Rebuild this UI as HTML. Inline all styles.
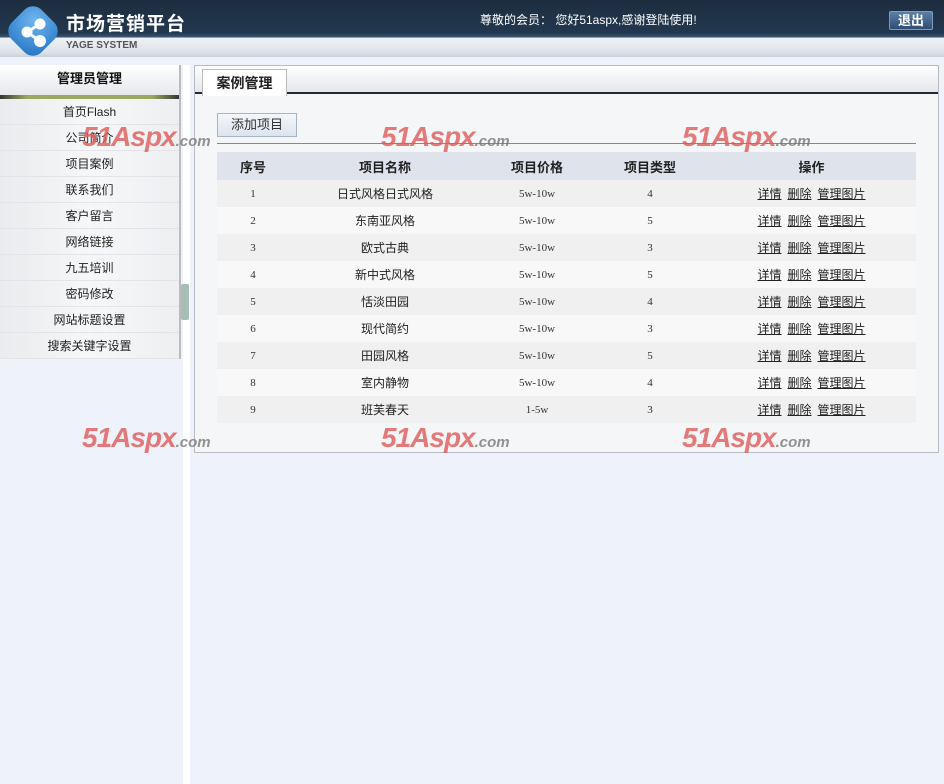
<!DOCTYPE html>
<html><head><meta charset="utf-8"><style>
*{margin:0;padding:0;box-sizing:border-box}
body{width:944px;height:784px;overflow:hidden;background:#eef2fa;font-family:"Liberation Sans","Noto Sans CJK SC","WenQuanYi Zen Hei",sans-serif;font-size:12px;color:#222;position:relative}
#hd{position:absolute;left:0;top:0;width:944px;height:57px;background:linear-gradient(#1d2d3f 0,#22384f 33px,#3a5670 37px,#eef1f5 38px,#dfe4ea 52px,#c9d0d8 57px)}
#logo{position:absolute;left:12px;top:10px;width:42px;height:42px;border-radius:12px;background:radial-gradient(circle at 35% 30%,#6fb6ef,#1e6fc1);transform:rotate(45deg)}
#share{position:absolute;left:14px;top:12px}
#title{position:absolute;left:66px;top:9px;color:#fff;font-size:19px;font-weight:bold;letter-spacing:1px}
#sub{position:absolute;left:66px;top:40px;color:#555;font-size:10px;font-weight:bold}
#wel{position:absolute;left:480px;top:11px;color:#fff;font-size:12px}
#out{position:absolute;left:889px;top:11px;width:44px;height:19px;border:1px solid #7c9cbf;border-radius:2px;background:linear-gradient(#5c7fa8,#2d4d75);color:#fff;font-weight:bold;font-size:13px;text-align:center;line-height:17px}
#side{position:absolute;left:0;top:65px;width:181px;height:294px;background:#f3f4f6;border-right:2px solid #bbb}
#side .h{height:30px;background:linear-gradient(#fff,#e6e8ec);text-align:center;line-height:28px;font-weight:bold;font-size:13px;color:#111}
#side .bar{height:4px;background:linear-gradient(90deg,#333,#9aa860 15%,#9aa860 85%,#333)}
#side div.i{height:26px;line-height:26px;text-align:center;border-bottom:1px solid #e2e4e8;color:#222;background:linear-gradient(90deg,#e9ebee,#f6f7f8 50%,#eeeff2)}
#strip{position:absolute;left:183px;top:65px;width:7px;height:719px;background:#fff}
#tog{position:absolute;left:181px;top:284px;width:8px;height:36px;background:#a8bdb6;border-radius:2px}
#main{position:absolute;left:194px;top:65px;width:745px;height:388px;background:#f5f6f8;border:1px solid #b8bcc2}
#tabbar{height:28px;background:linear-gradient(#fff,#e4e7eb);border-bottom:2px solid #1c2b3a;position:relative}
#tab{position:absolute;left:7px;top:3px;width:85px;height:27px;background:#fff;border:1px solid #bbb;border-bottom:none;font-size:14px;font-weight:bold;text-align:center;line-height:26px;color:#222}
#add{position:absolute;left:217px;top:113px;width:80px;height:24px;background:linear-gradient(#f4f7fb,#dbe4ee);border:1px solid #a8b4c2;text-align:center;line-height:22px;font-size:13px;color:#333}
#line{position:absolute;left:217px;top:143px;width:699px;height:1px;background:#888}
table{position:absolute;left:217px;top:152px;width:699px;border-collapse:collapse}
th{height:28px;background:#dee3ec;font-size:13px;font-weight:bold;color:#222}
td{height:27px;text-align:center;font-size:12px}
td.n{font-family:"Liberation Serif",serif;font-size:11px;color:#333}
tr:nth-child(even) td{background:#f0f0f0}
tr:nth-child(odd) td{background:#f8f8f8}
td u{margin:0 3px}
.wm{position:absolute;font-weight:bold;font-style:italic;font-size:28px;line-height:34px;color:#e05a5a;opacity:.8;letter-spacing:-1px}
.wm span{font-size:15px;color:#777;font-style:italic;letter-spacing:0}
</style></head><body>
<div id="hd"></div>
<div id="logo"></div>
<svg id="share" width="40" height="40" viewBox="0 0 40 40"><g stroke="#fff" stroke-width="3" fill="#fff"><line x1="13" y1="20" x2="26" y2="12"/><line x1="13" y1="20" x2="26" y2="29"/><circle cx="13" cy="20" r="4"/><circle cx="26" cy="12" r="4"/><circle cx="26" cy="29" r="4.5"/></g></svg>
<div id="title">市场营销平台</div>
<div id="sub">YAGE SYSTEM</div>
<div id="wel">尊敬的会员： 您好51aspx,感谢登陆使用!</div>
<div id="out">退出</div>
<div id="side">
<div class="h">管理员管理</div><div class="bar"></div>
<div class="i">首页Flash</div><div class="i">公司简介</div><div class="i">项目案例</div><div class="i">联系我们</div><div class="i">客户留言</div><div class="i">网络链接</div><div class="i">九五培训</div><div class="i">密码修改</div><div class="i">网站标题设置</div><div class="i">搜索关键字设置</div>
</div>
<div id="strip"></div><div id="tog"></div>
<div id="main"><div id="tabbar"><div id="tab">案例管理</div></div></div>
<div id="add">添加项目</div>
<div id="line"></div>
<table>
<tr><th style="width:72px">序号</th><th style="width:192px">项目名称</th><th style="width:112px">项目价格</th><th style="width:114px">项目类型</th><th>操作</th></tr>
<tr><td class="n">1</td><td>日式风格日式风格</td><td class="n">5w-10w</td><td class="n">4</td><td><u>详情</u><u>删除</u><u>管理图片</u></td></tr>
<tr><td class="n">2</td><td>东南亚风格</td><td class="n">5w-10w</td><td class="n">5</td><td><u>详情</u><u>删除</u><u>管理图片</u></td></tr>
<tr><td class="n">3</td><td>欧式古典</td><td class="n">5w-10w</td><td class="n">3</td><td><u>详情</u><u>删除</u><u>管理图片</u></td></tr>
<tr><td class="n">4</td><td>新中式风格</td><td class="n">5w-10w</td><td class="n">5</td><td><u>详情</u><u>删除</u><u>管理图片</u></td></tr>
<tr><td class="n">5</td><td>恬淡田园</td><td class="n">5w-10w</td><td class="n">4</td><td><u>详情</u><u>删除</u><u>管理图片</u></td></tr>
<tr><td class="n">6</td><td>现代简约</td><td class="n">5w-10w</td><td class="n">3</td><td><u>详情</u><u>删除</u><u>管理图片</u></td></tr>
<tr><td class="n">7</td><td>田园风格</td><td class="n">5w-10w</td><td class="n">5</td><td><u>详情</u><u>删除</u><u>管理图片</u></td></tr>
<tr><td class="n">8</td><td>室内静物</td><td class="n">5w-10w</td><td class="n">4</td><td><u>详情</u><u>删除</u><u>管理图片</u></td></tr>
<tr><td class="n">9</td><td>班芙春天</td><td class="n">1-5w</td><td class="n">3</td><td><u>详情</u><u>删除</u><u>管理图片</u></td></tr>
</table>
<div class="wm" style="left:82px;top:120px">51Aspx<span>.com</span></div>
<div class="wm" style="left:381px;top:120px">51Aspx<span>.com</span></div>
<div class="wm" style="left:682px;top:120px">51Aspx<span>.com</span></div>
<div class="wm" style="left:82px;top:421px">51Aspx<span>.com</span></div>
<div class="wm" style="left:381px;top:421px">51Aspx<span>.com</span></div>
<div class="wm" style="left:682px;top:421px">51Aspx<span>.com</span></div>
</body></html>
